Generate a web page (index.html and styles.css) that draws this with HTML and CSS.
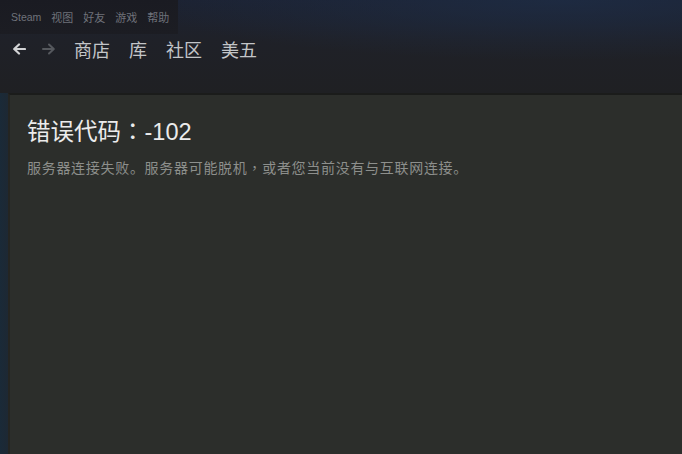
FILE: index.html
```html
<!DOCTYPE html>
<html lang="zh-CN">
<head>
<meta charset="utf-8">
<title>Steam</title>
<link rel="stylesheet" href="styles.css">
</head>
<body>
<div class="header">
  <div class="menubar">
    <span class="menu-item latin">Steam</span>
    <span class="menu-item">视图</span>
    <span class="menu-item">好友</span>
    <span class="menu-item">游戏</span>
    <span class="menu-item">帮助</span>
  </div>
  <div class="navbar">
    <svg class="arrow back" width="14" height="12" viewBox="0 0 14 12"><path d="M13 6H2.5M7 1.5L2.2 6L7 10.5" fill="none" stroke="currentColor" stroke-width="2.2" stroke-linecap="round" stroke-linejoin="round"/></svg>
    <svg class="arrow fwd" width="14" height="12" viewBox="0 0 14 12"><path d="M1 6H11.5M7 1.5L11.8 6L7 10.5" fill="none" stroke="currentColor" stroke-width="2" stroke-linecap="round" stroke-linejoin="round"/></svg>
    <nav class="tabs">
      <span class="tab">商店</span>
      <span class="tab">库</span>
      <span class="tab">社区</span>
      <span class="tab">美五</span>
    </nav>
  </div>
</div>
<div class="main">
  <div class="panel">
    <h1 class="err-title">错误代码<span class="punct" lang="zh-TW">：</span>-102</h1>
    <p class="err-text">服务器连接失败。服务器可能脱机<span class="punct" lang="zh-TW">，</span>或者您当前没有与互联网连接。</p>
  </div>
</div>
</body>
</html>
```

FILE: styles.css
```css
html, body {
  margin: 0;
  padding: 0;
}
body {
  width: 682px;
  height: 454px;
  overflow: hidden;
  background: #1e1f22;
  font-family: "Noto Sans CJK SC", "Noto Sans", sans-serif;
  display: flex;
  flex-direction: column;
}
.header {
  height: 93px;
  flex: none;
  display: flex;
  flex-direction: column;
  background:
    radial-gradient(ellipse 420px 60px at 560px 0px, rgba(30, 45, 70, 0.75), rgba(30, 45, 70, 0) 100%),
    linear-gradient(180deg, #1c2232 0px, #1f2128 40px, #1f2023 93px);
}
.menubar {
  height: 34px;
  width: 167px;
  padding-left: 11px;
  display: flex;
  align-items: center;
  gap: 10px;
  background: linear-gradient(180deg, #1a1b22 0px, #1c1d23 34px);
}
.menu-item {
  font-size: 11px;
  line-height: 14px;
  color: #6f727a;
}
.menu-item.latin {
  font-family: "Liberation Sans", sans-serif;
  font-size: 10.5px;
}
.navbar {
  height: 30px;
  display: flex;
  align-items: center;
  padding-left: 12px;
}
.arrow {
  flex: none;
  display: block;
}
.arrow.back {
  color: #d2d3d5;
}
.arrow.fwd {
  color: #55585d;
  margin-left: 16px;
}
.tabs {
  display: flex;
  align-items: center;
  gap: 19px;
  margin-left: 18px;
}
.tab {
  font-size: 18px;
  line-height: 24px;
  color: #c3c5c8;
}
.main {
  flex: 1;
  display: flex;
  background: linear-gradient(90deg, #1a2a38 0px, #1d2833 8px);
}
.panel {
  flex: 1;
  margin-left: 8px;
  border-left: 2px solid #242522;
  border-top: 2px solid #1b1c1b;
  background: #2c2e2b;
  padding: 19px 0 0 17px;
}
.err-title {
  margin: 0;
  font-family: "Liberation Sans", "Noto Sans CJK SC", sans-serif;
  font-size: 23.5px;
  line-height: 32px;
  font-weight: normal;
  color: #ebebeb;
}
.punct {
  font-family: "Noto Sans CJK TC", "Noto Sans CJK SC", sans-serif;
}
.err-text {
  margin: 9px 0 0 0;
  font-size: 14px;
  line-height: 20px;
  letter-spacing: 0.7px;
  color: #8d8f8c;
}
```
